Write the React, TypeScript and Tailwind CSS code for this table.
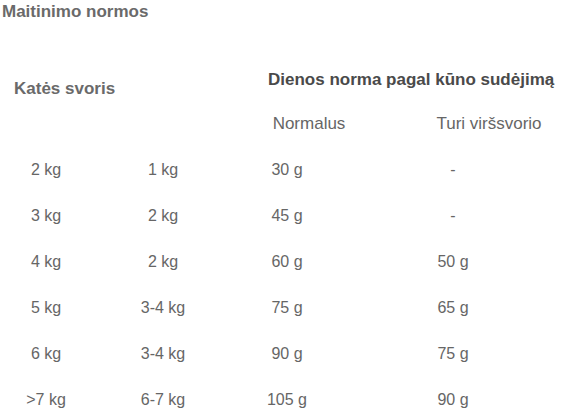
const rows = [
  ["2 kg", "1 kg", "30 g", "-"],
  ["3 kg", "2 kg", "45 g", "-"],
  ["4 kg", "2 kg", "60 g", "50 g"],
  ["5 kg", "3-4 kg", "75 g", "65 g"],
  ["6 kg", "3-4 kg", "90 g", "75 g"],
  [">7 kg", "6-7 kg", "105 g", "90 g"],
];

const colWidths = ["w-[92px]", "w-[142px]", "w-[106px]", "w-[226px]"];

export default function App() {
  return (
    <div
      className="w-[563px] h-[412px] overflow-hidden bg-white text-[#666]"
      style={{ fontFamily: '"Liberation Sans", Arial, sans-serif' }}
    >
      <div className="h-[24px] leading-[24px] text-[17px] font-bold text-[#6a6a6a] pl-[2px] whitespace-nowrap">
        Maitinimo normos
      </div>

      <div className="flex h-[123px]">
        <div className="w-[234px] shrink-0 pt-[53px] pl-[14px]">
          <div className="h-[24px] leading-[24px] text-[17px] font-bold text-[#6a6a6a] whitespace-nowrap">
            Katės svoris
          </div>
        </div>
        <div className="flex flex-col pt-[44px]">
          <div className="h-[24px] leading-[24px] text-[17px] font-bold text-[#4a4a4a] pl-[34px] whitespace-nowrap">
            Dienos norma pagal kūno sudėjimą
          </div>
          <div className="flex mt-[20px] text-[17px] leading-[24px] h-[24px] whitespace-nowrap">
            <div className="w-[150px] shrink-0 text-center">Normalus</div>
            <div className="w-[210px] shrink-0 text-center">Turi viršsvorio</div>
          </div>
        </div>
      </div>

      {rows.map((r, i) => (
        <div key={i} className="flex items-center h-[46px] text-[16px]">
          {r.map((c, j) => (
            <div key={j} className={`${colWidths[j]} shrink-0 text-center whitespace-nowrap`}>
              {c}
            </div>
          ))}
        </div>
      ))}
    </div>
  );
}
